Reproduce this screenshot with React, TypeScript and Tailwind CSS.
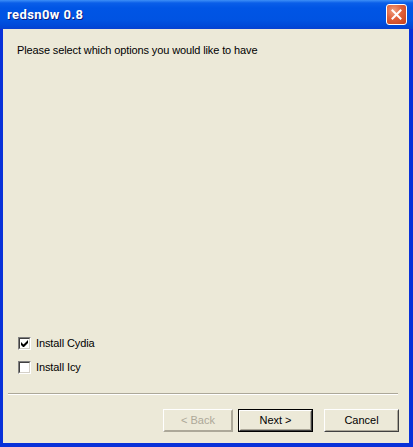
import { useState } from 'react';

const tahoma = { fontFamily: '"Liberation Sans", Arial, sans-serif' };

function Checkbox({ label, checked, onToggle }: { label: string; checked: boolean; onToggle: () => void }) {
  return (
    <div className="flex items-center h-[13px] cursor-default" onClick={onToggle}>
      <div className="w-[13px] h-[13px] border border-[#808080] border-r-white border-b-white bg-white flex items-center justify-center">
        <div className="w-[11px] h-[11px] border border-[#404040] border-r-[#d4d0c8] border-b-[#d4d0c8] flex items-center justify-center">
          {checked && (
            <svg width="7" height="7" viewBox="0 0 7 7">
              <path d="M0 2v3l2 2h1l4-4V0L2.5 4.5z" fill="#000" />
            </svg>
          )}
        </div>
      </div>
      <span className="ml-[5px] text-[11px] text-black leading-[13px] tracking-[-0.1px]">{label}</span>
    </div>
  );
}

function Btn({ children, disabled, primary, w }: { children: string; disabled?: boolean; primary?: boolean; w?: string }) {
  return (
    <div className={(w ?? 'w-[75px]') + ' h-[23px] ' + (primary ? 'border border-black' : '')}>
      <div
        className={
          'w-full h-full border border-white bg-[#ece9d8] ' +
          (disabled ? 'border-r-[#aca899] border-b-[#aca899]' : 'border-r-[#404040] border-b-[#404040]')
        }
      >
        <div className="w-full h-full border border-transparent border-r-[#aca899] border-b-[#aca899] flex items-center justify-center">
          <span className={'text-[11px] leading-[13px] ' + (disabled ? 'text-[#aca899]' : 'text-black')}>{children}</span>
        </div>
      </div>
    </div>
  );
}

export default function App() {
  const [cydia, setCydia] = useState(true);
  const [icy, setIcy] = useState(false);

  return (
    <div className="w-[413px] h-[447px] flex flex-col bg-[#0831d9]" style={tahoma}>
      <div className="h-[29px] flex items-center justify-between pl-[7px] pr-[6px] bg-[linear-gradient(to_bottom,#3d8ff7_0px,#0a5ee8_3px,#0055e5_8px,#0053e2_20px,#0047d6_27px,#0a3fd0_29px)]">
        <span className="text-white text-[13px] font-bold tracking-[0.4px]" style={{ fontFamily: 'Roboto, "DejaVu Sans", sans-serif', textShadow: '1px 1px 0 #0a1e80' }}>
          redsn0w 0.8
        </span>
        <div className="w-[21px] h-[21px] rounded-[3px] border border-white bg-[radial-gradient(circle_at_35%_30%,#f0a080_0%,#e0603a_45%,#c4401c_100%)] flex items-center justify-center">
          <svg width="11" height="11" viewBox="0 0 11 11">
            <path d="M1.5 1.5l8 8M9.5 1.5l-8 8" stroke="#fff" strokeWidth="2" strokeLinecap="square" />
          </svg>
        </div>
      </div>
      <div className="flex-1 ml-[3px] mr-[4px] mb-[4px] bg-[#ece9d8] flex flex-col">
        <p className="pt-[15px] pl-[14px] text-[11px] leading-[13px] text-black tracking-[-0.12px]">Please select which options you would like to have</p>
        <div className="flex-1" />
        <div className="flex flex-col gap-[11px] pl-[15px]">
          <Checkbox label="Install Cydia" checked={cydia} onToggle={() => setCydia(!cydia)} />
          <Checkbox label="Install Icy" checked={icy} onToggle={() => setIcy(!icy)} />
        </div>
        <div className="mt-[19px] ml-[5px] mr-[11px] border-t border-t-[#aca899] border-b border-b-white" />
        <div className="mt-[14px] mb-[11px] flex justify-end pr-[10px]">
          <Btn disabled w="w-[70px]">{'< Back'}</Btn>
          <div className="w-[5px]" />
          <Btn primary>{'Next >'}</Btn>
          <div className="w-[11px]" />
          <Btn>Cancel</Btn>
        </div>
      </div>
    </div>
  );
}
